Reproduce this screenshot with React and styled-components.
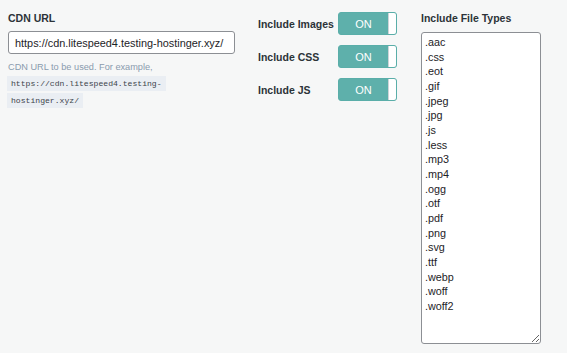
import React from "react";
import styled, { createGlobalStyle } from "styled-components";

const Global = createGlobalStyle`
  html, body { margin: 0; padding: 0; background: #f6f7f7; }
  body { font-family: "Liberation Sans", Arial, sans-serif; color: #2c3338; }
`;

const Page = styled.div`
  display: flex;
  align-items: flex-start;
  padding: 12px 8px 0 8px;
  height: 353px;
  box-sizing: border-box;
`;

const Column = styled.div`
  display: flex;
  flex-direction: column;
  width: ${(p) => p.width}px;
  margin-right: ${(p) => p.gap || 0}px;
`;

const Label = styled.div`
  font-size: 10.5px;
  line-height: 13px;
  font-weight: bold;
  color: #2c3338;
  white-space: nowrap;
`;

const UrlInput = styled.input`
  margin-top: 6px;
  height: 23px;
  box-sizing: border-box;
  width: 227px;
  padding: 0 6px;
  font-family: "Liberation Sans", Arial, sans-serif;
  font-size: 10.9px;
  color: #1d2327;
  background: #fff;
  border: 1px solid #8c8f94;
  border-radius: 3px;
  outline: none;
`;

const Description = styled.p`
  margin: 5px 0 0 0;
  max-width: 170px;
  font-size: 9.2px;
  line-height: 16px;
  color: #8a9bae;
`;

const Code = styled.code`
  font-family: "Liberation Mono", monospace;
  font-size: 8.1px;
  color: #3c434a;
  background: #eaeef3;
  padding: 3px 4px 3px 4px;
  margin-left: -1px;
  -webkit-box-decoration-break: clone;
  box-decoration-break: clone;
`;

const ToggleRow = styled.div`
  display: flex;
  align-items: center;
  height: 23px;
  margin-bottom: 10px;
`;

const ToggleLabel = styled.span`
  width: 80px;
  font-size: 10.5px;
  font-weight: bold;
  color: #2c3338;
  white-space: nowrap;
`;

const Toggle = styled.div`
  display: flex;
  width: 59px;
  height: 23px;
  box-sizing: border-box;
  border: 1px solid #5aaea9;
  border-radius: 3px;
  background: #5eb0ab;
  overflow: hidden;
`;

const ToggleText = styled.span`
  flex: 1;
  display: flex;
  align-items: center;
  justify-content: center;
  color: #fff;
  font-size: 11px;
`;

const Knob = styled.span`
  width: 7px;
  background: #fff;
  border-left: 1px solid #cfd4d8;
`;

const FileTypes = styled.textarea`
  margin-top: 7px;
  width: 120px;
  height: 312px;
  box-sizing: border-box;
  padding: 2px 3px;
  font-family: "Liberation Sans", Arial, sans-serif;
  font-size: 10.8px;
  line-height: 14.67px;
  color: #1d2327;
  background: #fff;
  border: 1px solid #8c8f94;
  border-radius: 3px;
  resize: vertical;
  outline: none;
`;

const types = [".aac", ".css", ".eot", ".gif", ".jpeg", ".jpg", ".js", ".less", ".mp3", ".mp4", ".ogg", ".otf", ".pdf", ".png", ".svg", ".ttf", ".webp", ".woff", ".woff2"];

const toggles = ["Include Images", "Include CSS", "Include JS"];

export default function App() {
  return (
    <>
      <Global />
      <Page>
        <Column width={227} gap={23}>
          <Label>CDN URL</Label>
          <UrlInput defaultValue="https://cdn.litespeed4.testing-hostinger.xyz/" />
          <Description>
            CDN URL to be used. For example,
            <br />
            <Code>https://cdn.litespeed4.testing-hostinger.xyz/</Code>
          </Description>
        </Column>
        <Column width={140} gap={23}>
          {toggles.map((t) => (
            <ToggleRow key={t}>
              <ToggleLabel>{t}</ToggleLabel>
              <Toggle>
                <ToggleText>ON</ToggleText>
                <Knob />
              </Toggle>
            </ToggleRow>
          ))}
        </Column>
        <Column width={120}>
          <Label>Include File Types</Label>
          <FileTypes defaultValue={types.join("\n")} />
        </Column>
      </Page>
    </>
  );
}
